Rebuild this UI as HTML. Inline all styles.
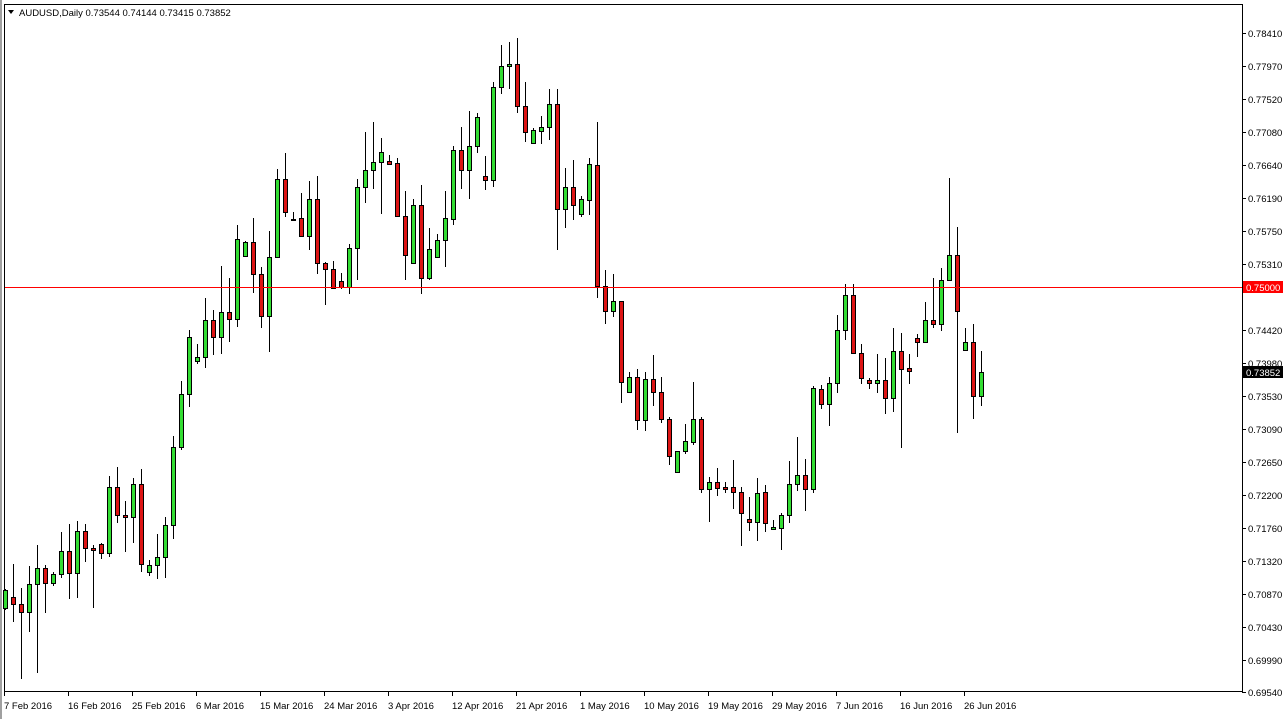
<!DOCTYPE html>
<html><head><meta charset="utf-8"><style>
html,body{margin:0;padding:0;background:#fff;}
body{width:1287px;height:719px;overflow:hidden;position:relative;font-family:"Liberation Sans",sans-serif;}
svg{position:absolute;left:0;top:0;}
text{font-family:"Liberation Sans",sans-serif;font-size:9.5px;fill:#000;}
</style></head><body>
<svg width="1287" height="719" viewBox="0 0 1287 719" shape-rendering="crispEdges">
<rect x="0" y="0" width="1287" height="719" fill="#fff"/>
<rect x="0" y="0" width="2" height="719" fill="#a0a0a0"/>
<rect x="4.5" y="4.5" width="1238" height="687" fill="none" stroke="#000"/>
<g id="wicks" stroke="#000" fill="none">
<path d="M5.5 589V610M13.5 564V622M21.5 588V679M29.5 566V632M37.5 545V673M45.5 565V613M53.5 572V586M61.5 532V578M69.5 524V599M77.5 521V598M85.5 524V562M93.5 545V608M101.5 543V559M109.5 476V557M117.5 467V523M125.5 501V552M133.5 478V543M141.5 469V572M149.5 560V576M157.5 534V579M165.5 517V578M173.5 436V539M181.5 381V450M189.5 330V407M197.5 344V364M205.5 298V368M213.5 310V355M221.5 266V354M229.5 278V342M237.5 225V327M245.5 241V257"/>
<path d="M253.5 218V293M261.5 267V328M269.5 231V352M277.5 169V258M285.5 153V217M293.5 212V221M301.5 193V236M309.5 181V250M317.5 176V274M325.5 262V305M333.5 261V289M341.5 273V289M349.5 244V294M357.5 179V280M365.5 132V203M373.5 122V189M381.5 138V214M389.5 155V165M397.5 158V217M405.5 191V280M413.5 199V263M421.5 185V294M429.5 228V280M437.5 234V258M445.5 191V267M453.5 146V225M461.5 127V189M469.5 111V199M477.5 113V153M485.5 156V190M493.5 82V187M501.5 45V94"/>
<path d="M509.5 42V89M517.5 38V113M525.5 82V142M533.5 128V144M541.5 116V144M549.5 89V140M557.5 89V250M565.5 168V228M573.5 160V220M581.5 196V217M589.5 158V215M597.5 122V298M605.5 270V324M613.5 274V317M621.5 301V403M629.5 372V393M637.5 369V430M645.5 372V431M653.5 355V406M661.5 377V423M669.5 417V465M677.5 451V472M685.5 424V454M693.5 382V445M701.5 417V493M709.5 477V522M717.5 468V496M725.5 482V493M733.5 460V509M741.5 487V546"/>
<path d="M749.5 497V531M757.5 478V541M765.5 485V532M773.5 520V530M781.5 513V550M789.5 461V523M797.5 437V491M805.5 459V511M813.5 386V493M821.5 385V409M829.5 377V426M837.5 315V393M845.5 284V340M853.5 284V354M861.5 344V384M869.5 378V389M877.5 354V393M885.5 358V414M893.5 328V412M901.5 333V448M909.5 354V384M917.5 334V357M925.5 302V343M933.5 278V328M941.5 268V331M949.5 178V281M957.5 227V433M965.5 328V350M973.5 324V419M981.5 351V406"/>
</g>
<g stroke="#000" stroke-width="1">
<g fill="#33dd33">
<rect x="3.5" y="590.5" width="4" height="18"/>
<rect x="27.5" y="584.5" width="4" height="28"/>
<rect x="35.5" y="568.5" width="4" height="16"/>
<rect x="51.5" y="574.5" width="4" height="9"/>
<rect x="59.5" y="551.5" width="4" height="23"/>
<rect x="75.5" y="531.5" width="4" height="42"/>
<rect x="107.5" y="487.5" width="4" height="66"/>
<rect x="131.5" y="484.5" width="4" height="33"/>
<rect x="147.5" y="565.5" width="4" height="7"/>
<rect x="155.5" y="557.5" width="4" height="8"/>
<rect x="163.5" y="525.5" width="4" height="32"/>
<rect x="171.5" y="447.5" width="4" height="78"/>
<rect x="179.5" y="394.5" width="4" height="53"/>
<rect x="187.5" y="337.5" width="4" height="57"/>
<rect x="195.5" y="357.5" width="4" height="4"/>
<rect x="203.5" y="320.5" width="4" height="37"/>
<rect x="219.5" y="312.5" width="4" height="25"/>
<rect x="235.5" y="239.5" width="4" height="80"/>
<rect x="243.5" y="242.5" width="4" height="14"/>
<rect x="267.5" y="257.5" width="4" height="59"/>
<rect x="275.5" y="179.5" width="4" height="78"/>
<rect x="307.5" y="199.5" width="4" height="37"/>
<rect x="347.5" y="248.5" width="4" height="39"/>
<rect x="355.5" y="187.5" width="4" height="61"/>
<rect x="363.5" y="170.5" width="4" height="17"/>
<rect x="371.5" y="162.5" width="4" height="8"/>
<rect x="379.5" y="152.5" width="4" height="10"/>
<rect x="411.5" y="205.5" width="4" height="58"/>
<rect x="427.5" y="249.5" width="4" height="29"/>
<rect x="435.5" y="240.5" width="4" height="17"/>
<rect x="443.5" y="218.5" width="4" height="22"/>
<rect x="451.5" y="150.5" width="4" height="69"/>
<rect x="467.5" y="146.5" width="4" height="24"/>
<rect x="475.5" y="117.5" width="4" height="29"/>
<rect x="491.5" y="87.5" width="4" height="93"/>
<rect x="499.5" y="66.5" width="4" height="21"/>
<rect x="507.5" y="64.5" width="4" height="2"/>
<rect x="531.5" y="130.5" width="4" height="13"/>
<rect x="539.5" y="127.5" width="4" height="4"/>
<rect x="547.5" y="104.5" width="4" height="23"/>
<rect x="563.5" y="187.5" width="4" height="22"/>
<rect x="579.5" y="199.5" width="4" height="15"/>
<rect x="587.5" y="164.5" width="4" height="36"/>
<rect x="611.5" y="301.5" width="4" height="10"/>
<rect x="627.5" y="377.5" width="4" height="15"/>
<rect x="643.5" y="379.5" width="4" height="41"/>
<rect x="675.5" y="451.5" width="4" height="21"/>
<rect x="683.5" y="441.5" width="4" height="10"/>
<rect x="691.5" y="419.5" width="4" height="23"/>
<rect x="707.5" y="482.5" width="4" height="7"/>
<rect x="755.5" y="493.5" width="4" height="29"/>
<rect x="771.5" y="527.5" width="4" height="2"/>
<rect x="779.5" y="515.5" width="4" height="13"/>
<rect x="787.5" y="484.5" width="4" height="31"/>
<rect x="795.5" y="475.5" width="4" height="9"/>
<rect x="811.5" y="388.5" width="4" height="101"/>
<rect x="827.5" y="383.5" width="4" height="21"/>
<rect x="835.5" y="330.5" width="4" height="53"/>
<rect x="843.5" y="295.5" width="4" height="35"/>
<rect x="875.5" y="380.5" width="4" height="3"/>
<rect x="891.5" y="351.5" width="4" height="47"/>
<rect x="923.5" y="320.5" width="4" height="22"/>
<rect x="939.5" y="280.5" width="4" height="44"/>
<rect x="947.5" y="255.5" width="4" height="25"/>
<rect x="963.5" y="342.5" width="4" height="8"/>
<rect x="979.5" y="372.5" width="4" height="24"/>
</g>
<g fill="#dd1414">
<rect x="11.5" y="597.5" width="4" height="7"/>
<rect x="19.5" y="604.5" width="4" height="8"/>
<rect x="43.5" y="568.5" width="4" height="15"/>
<rect x="67.5" y="551.5" width="4" height="22"/>
<rect x="83.5" y="531.5" width="4" height="17"/>
<rect x="91.5" y="548.5" width="4" height="2"/>
<rect x="99.5" y="544.5" width="4" height="9"/>
<rect x="115.5" y="487.5" width="4" height="28"/>
<rect x="123.5" y="515.5" width="4" height="2"/>
<rect x="139.5" y="484.5" width="4" height="80"/>
<rect x="211.5" y="320.5" width="4" height="17"/>
<rect x="227.5" y="312.5" width="4" height="7"/>
<rect x="251.5" y="242.5" width="4" height="32"/>
<rect x="259.5" y="274.5" width="4" height="42"/>
<rect x="283.5" y="179.5" width="4" height="33"/>
<rect x="291.5" y="219.5" width="4" height="1"/>
<rect x="299.5" y="218.5" width="4" height="18"/>
<rect x="315.5" y="199.5" width="4" height="64"/>
<rect x="323.5" y="263.5" width="4" height="6"/>
<rect x="331.5" y="269.5" width="4" height="19"/>
<rect x="339.5" y="281.5" width="4" height="6"/>
<rect x="387.5" y="161.5" width="4" height="3"/>
<rect x="395.5" y="163.5" width="4" height="53"/>
<rect x="403.5" y="216.5" width="4" height="39"/>
<rect x="419.5" y="205.5" width="4" height="73"/>
<rect x="459.5" y="150.5" width="4" height="20"/>
<rect x="483.5" y="176.5" width="4" height="4"/>
<rect x="515.5" y="64.5" width="4" height="42"/>
<rect x="523.5" y="106.5" width="4" height="26"/>
<rect x="555.5" y="104.5" width="4" height="105"/>
<rect x="571.5" y="187.5" width="4" height="18"/>
<rect x="595.5" y="165.5" width="4" height="121"/>
<rect x="603.5" y="286.5" width="4" height="25"/>
<rect x="619.5" y="301.5" width="4" height="81"/>
<rect x="635.5" y="377.5" width="4" height="43"/>
<rect x="651.5" y="379.5" width="4" height="13"/>
<rect x="659.5" y="392.5" width="4" height="27"/>
<rect x="667.5" y="419.5" width="4" height="37"/>
<rect x="699.5" y="419.5" width="4" height="70"/>
<rect x="715.5" y="482.5" width="4" height="6"/>
<rect x="723.5" y="487.5" width="4" height="2"/>
<rect x="731.5" y="487.5" width="4" height="5"/>
<rect x="739.5" y="492.5" width="4" height="21"/>
<rect x="747.5" y="519.5" width="4" height="3"/>
<rect x="763.5" y="492.5" width="4" height="31"/>
<rect x="803.5" y="475.5" width="4" height="14"/>
<rect x="819.5" y="389.5" width="4" height="15"/>
<rect x="851.5" y="295.5" width="4" height="58"/>
<rect x="859.5" y="353.5" width="4" height="25"/>
<rect x="867.5" y="380.5" width="4" height="3"/>
<rect x="883.5" y="380.5" width="4" height="18"/>
<rect x="899.5" y="351.5" width="4" height="18"/>
<rect x="907.5" y="368.5" width="4" height="3"/>
<rect x="915.5" y="338.5" width="4" height="4"/>
<rect x="931.5" y="320.5" width="4" height="4"/>
<rect x="955.5" y="255.5" width="4" height="56"/>
<rect x="971.5" y="342.5" width="4" height="54"/>
</g>
</g>
<rect x="5" y="287" width="1237" height="1" fill="#ff0000" stroke="none"/>
<g stroke="#000">
<path d="M1242 33.5h4M1242 66.5h4M1242 99.5h4M1242 132.5h4M1242 165.5h4M1242 198.5h4M1242 231.5h4M1242 264.5h4M1242 330.5h4M1242 363.5h4M1242 396.5h4M1242 429.5h4M1242 462.5h4M1242 495.5h4M1242 528.5h4M1242 561.5h4M1242 594.5h4M1242 627.5h4M1242 660.5h4M1242 692.5h4"/>
<path d="M4.5 691v5M68.5 691v5M132.5 691v5M196.5 691v5M260.5 691v5M324.5 691v5M388.5 691v5M452.5 691v5M516.5 691v5M580.5 691v5M644.5 691v5M708.5 691v5M772.5 691v5M836.5 691v5M900.5 691v5M964.5 691v5"/>
</g>
<g shape-rendering="auto">
<text x="1248" y="37">0.78410</text>
<text x="1248" y="70">0.77970</text>
<text x="1248" y="103">0.77520</text>
<text x="1248" y="136">0.77080</text>
<text x="1248" y="169">0.76640</text>
<text x="1248" y="202">0.76190</text>
<text x="1248" y="235">0.75750</text>
<text x="1248" y="268">0.75310</text>
<rect x="1243" y="281" width="40" height="12" fill="#ff0000"/>
<text x="1246" y="291" style="fill:#fff">0.75000</text>
<text x="1248" y="334">0.74420</text>
<text x="1248" y="367">0.73980</text>
<rect x="1243" y="366" width="40" height="12" fill="#000"/>
<text x="1246" y="376" style="fill:#fff">0.73852</text>
<text x="1248" y="400">0.73530</text>
<text x="1248" y="433">0.73090</text>
<text x="1248" y="466">0.72650</text>
<text x="1248" y="499">0.72200</text>
<text x="1248" y="532">0.71760</text>
<text x="1248" y="565">0.71320</text>
<text x="1248" y="598">0.70870</text>
<text x="1248" y="631">0.70430</text>
<text x="1248" y="664">0.69990</text>
<text x="1248" y="696">0.69540</text>
<text x="4" y="709">7 Feb 2016</text>
<text x="68" y="709">16 Feb 2016</text>
<text x="132" y="709">25 Feb 2016</text>
<text x="196" y="709">6 Mar 2016</text>
<text x="260" y="709">15 Mar 2016</text>
<text x="324" y="709">24 Mar 2016</text>
<text x="388" y="709">3 Apr 2016</text>
<text x="452" y="709">12 Apr 2016</text>
<text x="516" y="709">21 Apr 2016</text>
<text x="580" y="709">1 May 2016</text>
<text x="644" y="709">10 May 2016</text>
<text x="708" y="709">19 May 2016</text>
<text x="772" y="709">29 May 2016</text>
<text x="836" y="709">7 Jun 2016</text>
<text x="900" y="709">16 Jun 2016</text>
<text x="964" y="709">26 Jun 2016</text>
<path d="M8 10h6l-3 4z" fill="#000"/>
<text x="19" y="16">AUDUSD,Daily  0.73544 0.74144 0.73415 0.73852</text>
</g>
</svg>
</body></html>
